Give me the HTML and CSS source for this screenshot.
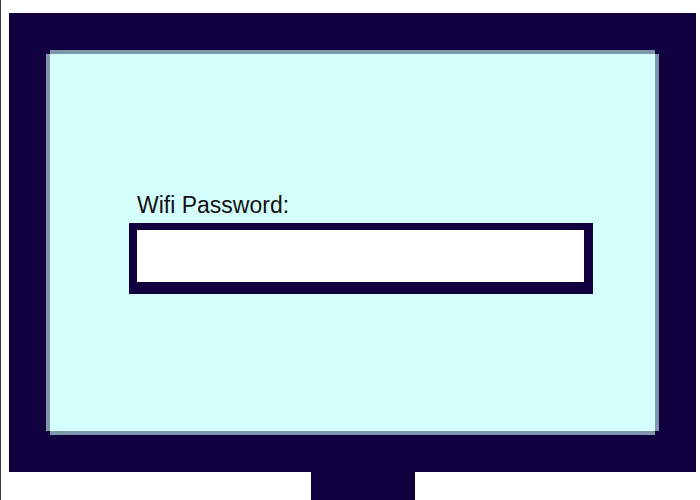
FILE: index.html
```html
<!DOCTYPE html>
<html>
<head>
<meta charset="utf-8">
<link rel="stylesheet" href="styles.css">
</head>
<body>
<div class="page">
  <div class="monitor">
    <div class="screen">
      <label class="label" for="pw">Wifi Password:</label>
      <div class="field"><div class="field-inner" id="pw"></div></div>
    </div>
  </div>
  <div class="stand"></div>
</div>
</body>
</html>
```
FILE: styles.css
```css
html, body {
  margin: 0;
  padding: 0;
  background: #ffffff;
  overflow: hidden;
}
body {
  border-left: 1px solid #3a3a3a;
  height: 500px;
  box-sizing: border-box;
  font-family: "Liberation Sans", Arial, sans-serif;
}
.page {
  padding: 13px 0 0 8px;
}
.monitor {
  width: 687px;
  height: 459px;
  box-sizing: border-box;
  padding: 41px;
  background: #10003f;
}
.screen {
  width: 605px;
  height: 377px;
  background: #d4fffd;
  box-shadow: 0 -4px 0 0 #7f97aa, -4px 0 0 0 #7f97aa, 4px 0 0 0 #7f97aa, 0 4px 0 0 #7f97aa;
  padding: 139px 0 0 79px;
  box-sizing: border-box;
  display: flex;
  flex-direction: column;
  align-items: flex-start;
}
.label {
  display: block;
  margin-left: 8px;
  font-size: 23px;
  line-height: 25px;
  color: #111111;
}
.field {
  margin-top: 5px;
  border-style: solid;
  border-color: #10003f;
  border-width: 7px 9px 12px 8px;
  background: #ffffff;
}
.field-inner {
  width: 447px;
  height: 52px;
}
.stand {
  margin-left: 302px;
  width: 104px;
  height: 28px;
  background: #10003f;
}
```
